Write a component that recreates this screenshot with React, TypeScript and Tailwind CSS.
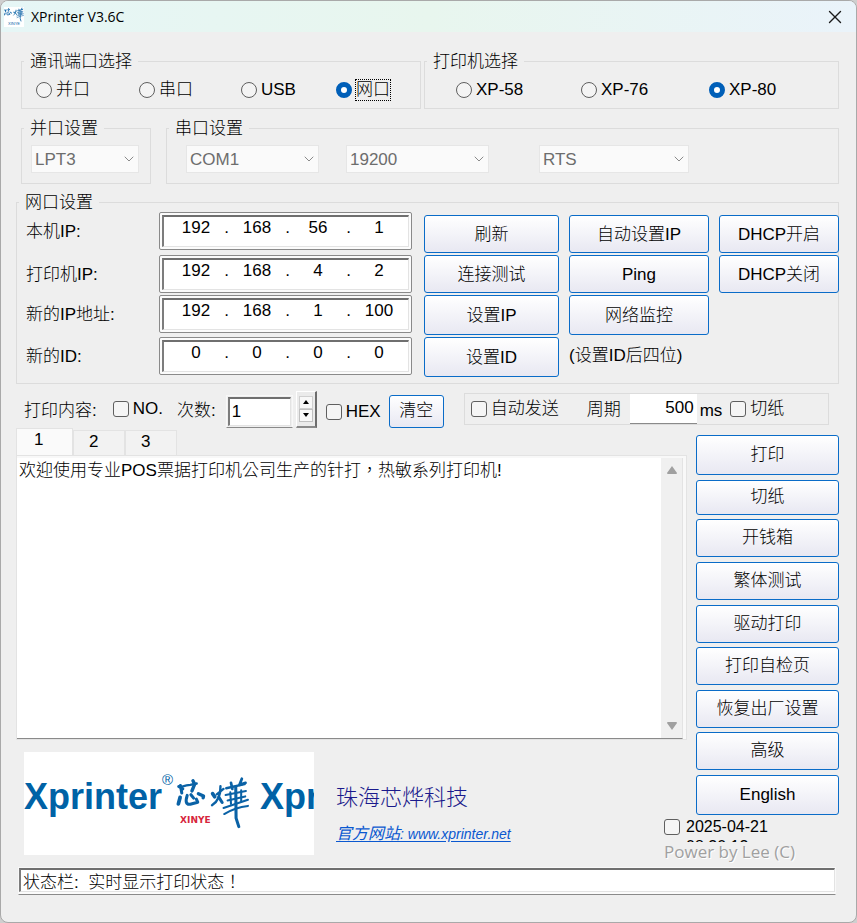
import { useState } from "react";
import type { ReactNode } from "react";
import { ChevronDown, X } from "lucide-react";

function Mark({ className }: { className: string }) {
  return (
    <svg viewBox="66 36 218 156" className={className} fill="none" stroke="#0a62a6" strokeLinecap="round" strokeLinejoin="round" aria-hidden="true">
      <path d="M74 67 L86 74 M79 64 L83 86" strokeWidth="9" />
      <path d="M84 67 Q98 63 108 62 L127 58" strokeWidth="7" />
      <path d="M116 50 L121 60 L113 80" strokeWidth="10" />
      <path d="M78 99 L73 118" strokeWidth="11" />
      <path d="M99 93 Q90 122 108 119 L130 113 L126 104" strokeWidth="9" />
      <path d="M110 91 L118 101" strokeWidth="9" />
      <path d="M132 88 L147 95 L146 100" strokeWidth="10" />
      <path d="M174 88 L180 97" strokeWidth="11" />
      <path d="M206 74 L186 90 M197 66 Q198 106 172 122" strokeWidth="7" />
      <path d="M192 98 L202 114" strokeWidth="9" />
      <path d="M214 72 L268 60" strokeWidth="7" />
      <path d="M228 56 L232 74 M260 44 L253 62 L271 56" strokeWidth="8" />
      <path d="M212 92 L272 80 M218 108 L270 96 M206 130 L278 106" strokeWidth="6" />
      <path d="M226 84 L228 118 M258 78 L258 112 M208 148 Q240 128 278 124" strokeWidth="6" />
      <path d="M242 68 L243 160 L251 185" strokeWidth="9" />
    </svg>
  );
}

function Group({ title, className = "", children }: { title: string; className?: string; children: ReactNode }) {
  return (
    <fieldset className={`min-w-0 border border-[#dcdcdc] ${className}`}>
      <legend className="ml-0.5 h-5 px-1.5 leading-[22px]">{title}</legend>
      {children}
    </fieldset>
  );
}

function Radio({ name, label, checked = false, focused = false }: { name: string; label: string; checked?: boolean; focused?: boolean }) {
  return (
    <label className="flex items-center gap-[3px]">
      <input
        type="radio"
        name={name}
        defaultChecked={checked}
        className="size-4 shrink-0 appearance-none rounded-full border border-[#5f5f5f] bg-[#f4f4f4] checked:border-[5px] checked:border-[#005fb8] checked:bg-white"
      />
      <span className={`border border-dotted leading-5 ${focused ? "border-black" : "border-transparent"}`}>{label}</span>
    </label>
  );
}

function Check({ label }: { label: string }) {
  return (
    <label className="flex items-center gap-1">
      <input type="checkbox" className="size-4 shrink-0 appearance-none rounded-[3px] border border-[#5f5f5f] bg-[#f5f5f5] checked:bg-[#005fb8]" />
      <span>{label}</span>
    </label>
  );
}

function Combo({ label, value, className }: { label: string; value: string; className: string }) {
  return (
    <div className={`grid h-7 items-center ${className}`}>
      <select
        aria-label={label}
        disabled
        defaultValue={value}
        className="col-start-1 row-start-1 h-full w-full appearance-none border border-[#e6e6e6] bg-[#fafafa] px-[3px] pt-0.5 text-[#6d6d6d] opacity-100"
      >
        <option>{value}</option>
      </select>
      <ChevronDown className="pointer-events-none col-start-1 row-start-1 mr-0.5 size-4 justify-self-end text-[#8a8a8a]" strokeWidth={1.5} />
    </div>
  );
}

function Button({ children, className = "" }: { children: ReactNode; className?: string }) {
  return (
    <button
      type="button"
      className={`rounded-[3px] border border-[#0a6cc8] bg-linear-to-b from-white to-[#e8e8f2] whitespace-nowrap ${className}`}
    >
      {children}
    </button>
  );
}

const sunken = "border border-t-2 border-l-2 border-t-[#6f6f6f] border-l-[#7c7c7c] border-r-[#e3e3e3] border-b-[#e3e3e3] bg-white";

function Address({ label, parts }: { label: string; parts: string[] }) {
  return (
    <div className="h-[38px] rounded-xs border border-[#8a8a8a] bg-[#fbfbfb] p-0.5" role="group" aria-label={label}>
      <div className={`flex h-full items-start justify-center pl-[3px] ${sunken}`}>
        {parts.map((part, i) => (
          <div key={i} className="flex">
            {i > 0 && <span className="w-[15px] text-center leading-[22px]">.</span>}
            <input aria-label={`${label} ${i + 1}`} defaultValue={part} className="h-[22px] w-[46px] text-center outline-none" />
          </div>
        ))}
      </div>
    </div>
  );
}

const rows = [
  { label: "本机IP:", parts: ["192", "168", "56", "1"] },
  { label: "打印机IP:", parts: ["192", "168", "4", "2"] },
  { label: "新的IP地址:", parts: ["192", "168", "1", "100"] },
  { label: "新的ID:", parts: ["0", "0", "0", "0"] },
];

const actions = [
  ["刷新", "自动设置IP", "DHCP开启"],
  ["连接测试", "Ping", "DHCP关闭"],
  ["设置IP", "网络监控"],
  ["设置ID"],
];

const commands = [
  { label: "打印", size: "h-10" },
  { label: "切纸", size: "h-[35px]" },
  { label: "开钱箱", size: "h-[38px]" },
  { label: "繁体测试", size: "h-[38px]" },
  { label: "驱动打印", size: "h-[38px]" },
  { label: "打印自检页", size: "h-[38px]" },
  { label: "恢复出厂设置", size: "h-[38px]" },
  { label: "高级", size: "h-[38px]" },
  { label: "English", size: "h-10" },
];

export default function App() {
  const [tab, setTab] = useState(0);
  const [texts, setTexts] = useState(["欢迎使用专业POS票据打印机公司生产的针打，热敏系列打印机!", "", ""]);

  return (
    <div className="min-h-screen bg-[#cfcfcf]">
      <main className="flex min-h-screen flex-col overflow-hidden rounded-lg border border-[#a9a9a9] bg-[#efefef] font-['Liberation_Sans','Noto_Sans_CJK_SC',sans-serif] text-[17px] leading-5 font-light text-black">
        <header className="flex h-[31px] items-center bg-linear-to-r from-[#e6f6f6] via-[#e8f6ee] to-[#eaf3fa] pr-2.5 pl-[3px]">
          <span className="flex size-5 flex-col items-center bg-white">
            <Mark className="h-[15px] w-5" />
            <span className="text-[4px] leading-[4px] text-[#0a62a6]">XINYE</span>
          </span>
          <h1 className="ml-[7px] flex-1 font-['Open_Sans',sans-serif] text-[14px] font-normal">XPrinter V3.6C</h1>
          <button type="button" aria-label="关闭">
            <X className="size-[22px] text-[#1a1a1a]" strokeWidth={1.5} />
          </button>
        </header>

        <div className="pt-[19px] pr-[17px] pl-[15px]">
          <div className="ml-[5px] grid grid-cols-[400fr_415fr] gap-[3px]">
            <Group title="通讯端口选择">
              <div className="grid h-[37px] grid-cols-[103fr_102fr_95fr_84fr] items-center pl-3.5">
                <Radio name="port" label="并口" />
                <Radio name="port" label="串口" />
                <Radio name="port" label="USB" />
                <Radio name="port" label="网口" checked focused />
              </div>
            </Group>
            <Group title="打印机选择">
              <div className="grid h-[37px] grid-cols-[125fr_128fr_129fr] items-center pl-[31px]">
                <Radio name="model" label="XP-58" />
                <Radio name="model" label="XP-76" />
                <Radio name="model" label="XP-80" checked />
              </div>
            </Group>
          </div>

          <div className="mt-[9px] ml-[5px] grid grid-cols-[130fr_673fr] gap-[15px]">
            <Group title="并口设置">
              <div className="h-[45px] pt-[7px] pr-[11px] pl-[9px]">
                <Combo label="并口" value="LPT3" className="w-full" />
              </div>
            </Group>
            <Group title="串口设置">
              <div className="grid h-[45px] grid-cols-[160fr_193fr_299fr] pt-[7px] pl-[19px]">
                <Combo label="串口" value="COM1" className="w-[133px]" />
                <Combo label="波特率" value="19200" className="w-[143px]" />
                <Combo label="流控" value="RTS" className="w-[150px]" />
              </div>
            </Group>
          </div>

          <Group title="网口设置" className="mt-2 pb-[6px]">
            <div className="-mr-px flex gap-3">
              <div className="grid flex-1 grid-cols-[133fr_253fr] grid-rows-[41px_38px_40px_40px] gap-y-0.5 pl-[9px]">
                {rows.map((row) => (
                  <div key={row.label} className="col-span-2 grid grid-cols-subgrid items-start">
                    <span className="leading-[40px]">{row.label}</span>
                    <Address label={row.label} parts={row.parts} />
                  </div>
                ))}
              </div>
              <div className="grid grid-cols-[135px_140px_120px] grid-rows-[38px_38px_40px_40px] gap-x-2.5 gap-y-0.5 pt-[3px]">
                {actions.map((line, r) => (
                  <div key={r} className="col-span-3 grid grid-cols-subgrid">
                    {line.map((text) => (
                      <Button key={text} className="pt-0.5">{text}</Button>
                    ))}
                    {r === 3 && <span className="leading-[38px]">(设置ID后四位)</span>}
                  </div>
                ))}
              </div>
            </div>
          </Group>

          <div className="mt-1.5 flex h-[38px] items-center pr-2.5 pl-2">
            <span className="pt-1">打印内容:</span>
            <div className="ml-4">
              <Check label="NO." />
            </div>
            <label htmlFor="times" className="ml-3.5 pt-1">
              次数:
            </label>
            <div className="mt-1 ml-2.5 h-[33px] w-[67px] border border-[#f8f8f8] border-b-[#8a8a8a] p-px">
              <input id="times" defaultValue="1" className={`h-full w-full px-0.5 outline-none ${sunken}`} />
            </div>
            <div className="ml-[3px] flex h-[37px] w-[21px] flex-col items-center justify-center border border-r-2 border-b-2 border-white border-r-[#6d6d6d] border-b-[#8a8a8a] bg-[#ebebeb]">
              <button type="button" aria-label="增加" className="flex h-[13px] w-3.5 items-center justify-center border border-[#d0d0d0] bg-[#f8f8f8]">
                <svg viewBox="0 0 6 4" className="h-1 w-1.5"><path d="M0 4 L3 0 L6 4Z" /></svg>
              </button>
              <button type="button" aria-label="减少" className="flex h-[13px] w-3.5 items-center justify-center border border-[#c0c0c0] bg-[#f8f8f8]">
                <svg viewBox="0 0 6 4" className="h-1 w-1.5"><path d="M0 0 L3 4 L6 0Z" /></svg>
              </button>
            </div>
            <div className="mt-1.5 ml-[9px]">
              <Check label="HEX" />
            </div>
            <Button className="mt-1 ml-2 h-[33px] w-[55px]">清空</Button>
            <div className="ml-5 flex h-8 flex-1 items-center border border-[#dcdcdc] pl-1.5">
              <Check label="自动发送" />
              <label htmlFor="cycle" className="ml-7 pt-0.5">
                周期
              </label>
              <input id="cycle" defaultValue="500" className="ml-[9px] h-[30px] w-[67px] border-b border-[#8a8a8a] bg-white px-[3px] pb-0.5 text-right outline-none" />
              <span className="mr-2 ml-[3px] pt-1 font-normal">ms</span>
              <Check label="切纸" />
            </div>
          </div>

          <div className="grid grid-cols-[1fr_23px_152px] grid-rows-[312px_75px_48px]">
            <section className="col-span-2 flex flex-col">
              <div role="tablist" className="flex h-[27px] items-end">
                {["1", "2", "3"].map((name, i) => (
                  <button
                    key={name}
                    type="button"
                    role="tab"
                    aria-selected={tab === i}
                    onClick={() => setTab(i)}
                    className={`border border-b-0 border-[#e3e3e3] text-left ${tab === i ? "h-[27px] w-[57px] bg-[#fafafa] pb-1 pl-[17px]" : "h-[25px] w-[52px] bg-[#f2f2f2] pb-0.5 pl-[15px]"}`}
                  >
                    {name}
                  </button>
                ))}
              </div>
              <div className="flex flex-1 border border-[#e3e3e3] bg-[#f8f8f8] pt-0.5 pr-[3px]">
                <div className="flex flex-1 border-r border-b border-r-[#e3e3e3] border-b-[#8a8a8a] bg-white">
                  <textarea
                    aria-label="打印内容"
                    value={texts[tab]}
                    onChange={(e) => setTexts(texts.map((t, i) => (i === tab ? e.target.value : t)))}
                    className="flex-1 resize-none overflow-hidden px-0.5 py-[3px] font-['Liberation_Sans','Noto_Sans_CJK_TC',sans-serif] leading-5 outline-none"
                  />
                  <div className="flex w-[21px] flex-col items-center justify-between bg-[#f0f0f0] py-2">
                    <svg viewBox="0 0 10 8" className="h-2 w-2.5" fill="#a0a0a0"><path d="M5 0 L10 7 Q10 8 9 8 H1 Q0 8 0 7Z" /></svg>
                    <svg viewBox="0 0 10 8" className="h-2 w-2.5" fill="#a0a0a0"><path d="M5 8 L10 1 Q10 0 9 0 H1 Q0 0 0 1Z" /></svg>
                  </div>
                </div>
              </div>
            </section>

            <div className="row-span-2 flex flex-col justify-between pt-[7px] pl-[9px]">
              {commands.map((c) => (
                <Button key={c.label} className={`w-full ${c.size}`}>
                  {c.label}
                </Button>
              ))}
            </div>

            <div className="row-span-2 flex pt-3 pl-2">
              <div className="flex h-[103px] w-[290px] items-start overflow-hidden bg-white pt-5 font-bold whitespace-nowrap text-[#0062a6]">
                <span className="text-[36px] leading-[50px]">Xprinter</span>
                <span className="text-[15px] leading-4 font-normal">®</span>
                <span className="ml-[3px] flex w-[74px] shrink-0 flex-col pt-1">
                  <Mark className="h-[53px] w-[74px]" />
                  <span className="-mt-3.5 ml-1 font-['DejaVu_Sans',sans-serif] text-[9px] leading-[10px] text-[#d7263d]">XINYE</span>
                </span>
                <span className="ml-2.5 text-[36px] leading-[50px]">Xprinter</span>
              </div>
              <div className="ml-[22px] flex flex-col pt-8">
                <span className="text-[22px] leading-7 text-[#1a1a8c]">珠海芯烨科技</span>
                <a href="#site" className="mt-2.5 text-[14px] font-normal text-[#0a58d0] italic underline underline-offset-2">
                  <span className="text-base">官方网站</span>: www.xprinter.net
                </a>
              </div>
            </div>

            <div className="col-span-2 pt-0.5">
              <label className="flex h-[25px] items-start gap-1.5 overflow-hidden">
                <input type="checkbox" className="mt-0.5 size-4 shrink-0 appearance-none rounded-[3px] border border-[#5f5f5f] bg-[#f5f5f5] checked:bg-[#005fb8]" />
                <span className="w-24 text-base leading-5">2025-04-21 08:30:13</span>
              </label>
              <p className="font-['Open_Sans',sans-serif] font-normal text-[#a0a0a0] [text-shadow:1px_1px_0_#fff]">Power by Lee (C)</p>
            </div>
          </div>

          <div className="mt-1 mr-[3px] ml-0.5 h-[28px] border border-[#f8f8f8] border-b-[#8a8a8a] bg-[#fbfbfb] pb-0.5">
            <input
              aria-label="状态栏"
              readOnly
              defaultValue="状态栏:  实时显示打印状态！"
              className={`h-full w-full px-0.5 font-['Liberation_Sans','Noto_Sans_CJK_TC',sans-serif] outline-none ${sunken}`}
            />
          </div>
        </div>
      </main>
    </div>
  );
}
